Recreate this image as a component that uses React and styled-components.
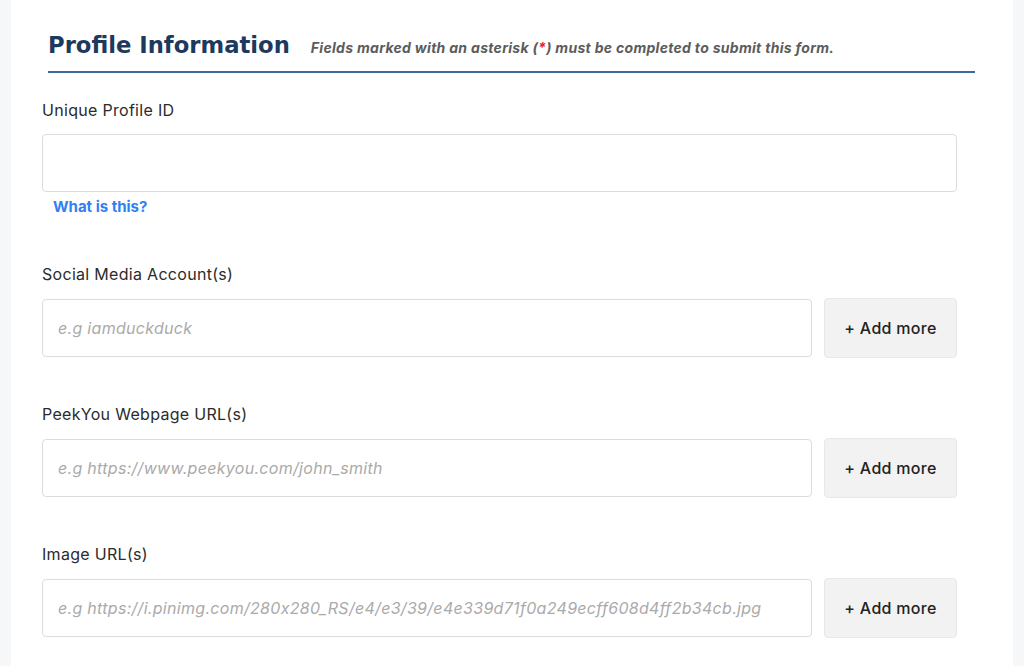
import React from "react";
import styled, { createGlobalStyle } from "styled-components";

const GlobalStyle = createGlobalStyle`
  html, body {
    margin: 0;
    padding: 0;
    background: #f6f7f9;
  }
  body {
    font-family: Inter, "Noto Sans", sans-serif;
    color: #2b2b2b;
  }
`;

const fields = [
  { label: "Social Media Account(s)", placeholder: "e.g iamduckduck" },
  {
    label: "PeekYou Webpage URL(s)",
    placeholder: "e.g https://www.peekyou.com/john_smith",
  },
  {
    label: "Image URL(s)",
    placeholder:
      "e.g https://i.pinimg.com/280x280_RS/e4/e3/39/e4e339d71f0a249ecff608d4ff2b34cb.jpg",
  },
];

function App() {
  return (
    <>
      <GlobalStyle />
      <Page>
        <Card>
          <Header>
            <Title>Profile Information</Title>
            <Note>
              Fields marked with an asterisk (<Star>*</Star>) must be completed
              to submit this form.
            </Note>
          </Header>
          <Fields>
            <Group>
              <Label>Unique Profile ID</Label>
              <Input type="text" />
              <Help href="#">What is this?</Help>
            </Group>
            {fields.map((f) => (
              <Group key={f.label}>
                <Label>{f.label}</Label>
                <Row>
                  <Input type="text" placeholder={f.placeholder} />
                  <AddButton type="button">+ Add more</AddButton>
                </Row>
              </Group>
            ))}
          </Fields>
        </Card>
      </Page>
    </>
  );
}

export default App;

const Page = styled.div`
  min-height: 666px;
  padding: 0 11px;
  box-sizing: border-box;
`;

const Card = styled.div`
  background: #ffffff;
  min-height: 666px;
  padding: 30px 38px 0 37px;
  box-sizing: border-box;
`;

const Header = styled.div`
  display: flex;
  align-items: baseline;
  gap: 21px;
  padding-bottom: 11px;
  border-bottom: 2px solid #3a6b9c;
`;

const Title = styled.h2`
  margin: 0;
  font-family: "DejaVu Sans", Verdana, sans-serif;
  font-weight: 700;
  font-size: 22.7px;
  line-height: 30px;
  color: #1d3a5e;
`;

const Note = styled.span`
  font-family: Inter, "Liberation Sans", sans-serif;
  font-size: 14px;
  letter-spacing: 0.3px;
  font-weight: 700;
  font-style: italic;
  color: #5c5c5c;
`;

const Star = styled.span`
  color: #e8231f;
`;

const Fields = styled.div`
  display: flex;
  flex-direction: column;
  gap: 44px;
  margin: 25px 18px 0 -6px;
`;

const Group = styled.div`
  display: flex;
  flex-direction: column;
`;

const Label = styled.label`
  font-size: 16px;
  letter-spacing: 0.3px;
  line-height: 24px;
  color: #2b2b2b;
  margin-bottom: 12px;
`;

const Row = styled.div`
  display: flex;
  align-items: center;
  gap: 12px;
`;

const Input = styled.input`
  flex: 1 1 auto;
  width: 100%;
  min-width: 0;
  height: 58px;
  box-sizing: border-box;
  border: 1px solid #dcdcdc;
  border-radius: 4px;
  padding: 0 15px;
  font-family: Inter, "Noto Sans", sans-serif;
  font-size: 16px;
  letter-spacing: 0.3px;
  color: #333;
  outline: none;
  &::placeholder {
    color: #aaaaaa;
    font-style: italic;
  }
`;

const Help = styled.a`
  align-self: flex-start;
  margin: 4px 0 0 11px;
  font-size: 15px;
  line-height: 22px;
  font-weight: 700;
  color: #2f80f2;
  text-decoration: none;
`;

const AddButton = styled.button`
  width: 133px;
  height: 60px;
  flex-shrink: 0;
  border: 1px solid #e8e8e8;
  border-radius: 4px;
  background: #f2f2f2;
  font-family: Inter, "Noto Sans", sans-serif;
  font-size: 16px;
  letter-spacing: 0.3px;
  font-weight: 500;
  color: #222;
  cursor: pointer;
`;
